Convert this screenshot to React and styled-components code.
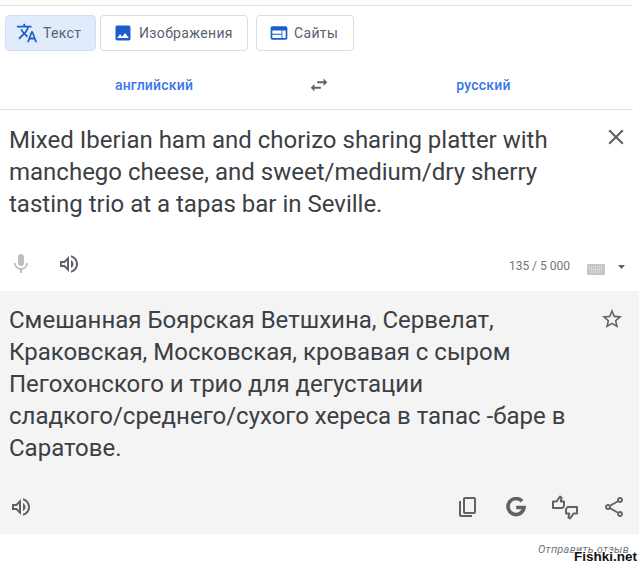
import React from 'react';
import styled, { createGlobalStyle } from 'styled-components';

const Global = createGlobalStyle`
  html, body { margin: 0; padding: 0; background: #fff; }
  body { font-family: Roboto, "Noto Sans", sans-serif; }
`;

const Page = styled.div`
  position: relative;
  width: 641px;
  height: 568px;
  overflow: hidden;
  padding-top: 5px;
  box-sizing: border-box;
  color: #3c4043;
`;
const Top = styled.div`
  width: 633px;
  border-top: 1px solid #e3e3e3;
`;
const Tabs = styled.div`
  display: flex;
  padding: 9px 0 0 5px;
  height: 36px;
`;
const Tab = styled.button`
  display: flex;
  align-items: center;
  box-sizing: border-box;
  height: 36px;
  width: ${p => p.$w}px;
  margin-right: ${p => p.$mr}px;
  padding: 0 0 0 ${p => p.$pl}px;
  gap: ${p => p.$gap}px;
  border: 1px solid ${p => (p.$active ? '#d2e0f7' : '#dadce0')};
  border-radius: 4px;
  background: ${p => (p.$active ? '#e1ebfb' : '#fff')};
  font-family: Roboto, sans-serif;
  font-size: 14px;
  font-weight: 400;
  letter-spacing: 0.35px;
  color: #5a5f6e;
  svg { fill: #1a5fc8; flex: none; }
`;
const LangRow = styled.div`
  display: grid;
  grid-template-columns: 308px 22px 1fr;
  align-items: center;
  box-sizing: border-box;
  width: 633px;
  height: 59px;
  padding-top: 10px;
  border-bottom: 1px solid #e0e0e0;
`;
const Lang = styled.div`
  text-align: center;
  padding-left: ${p => p.$pl || 0}px;
  font-size: 14px;
  font-weight: 500;
  color: #3a76ea;
  letter-spacing: 0.2px;
`;
const Icon = styled.svg`
  display: block;
  flex: none;
  width: ${p => p.$s || 24}px;
  height: ${p => p.$s || 24}px;
  margin-top: ${p => p.$mt || 0}px;
  margin-right: ${p => p.$mr || 0}px;
  fill: ${p => p.$c || '#5f6368'};
`;
const Source = styled.section`
  height: 181px;
  box-sizing: border-box;
  width: 633px;
  padding: 14px 0 0 9px;
  display: flex;
  flex-direction: column;
`;
const TextRow = styled.div`
  display: flex;
  justify-content: space-between;
  align-items: flex-start;
`;
const Body = styled.div`
  font-size: 24px;
  line-height: 32px;
  color: #3c4043;
  width: ${p => p.$w}px;
`;
const NoBreak = styled.span`
  white-space: nowrap;
`;
const SourceTools = styled.div`
  display: flex;
  align-items: center;
  margin-top: 30px;
  height: 28px;
`;
const Count = styled.span`
  font-size: 12px;
  color: #70757a;
  margin-left: auto;
  margin-top: 4px;
`;
const Target = styled.section`
  width: 639px;
  height: 243px;
  box-sizing: border-box;
  background: #f4f4f4;
  padding: 13px 0 0 9px;
  display: flex;
  flex-direction: column;
`;
const TargetTools = styled.div`
  display: flex;
  align-items: center;
  margin-top: 31px;
  height: 24px;
`;
const Feedback = styled.div`
  text-align: right;
  padding: 9px 12px 0 0;
  font-size: 11px;
  font-style: italic;
  color: #70757a;
  letter-spacing: 0.25px;
`;
const Watermark = styled.div`
  position: absolute;
  right: 4px;
  bottom: 4px;
  font-family: "Liberation Sans", sans-serif;
  font-size: 13.5px;
  font-weight: 700;
  color: #111;
  text-shadow: 1px 0 #fff, -1px 0 #fff, 0 1px #fff, 0 -1px #fff, 1px 1px #fff, -1px -1px #fff, 1px -1px #fff, -1px 1px #fff;
`;

const P = {
  translate: 'M12.87 15.07l-2.54-2.51.03-.03c1.74-1.94 2.98-4.17 3.71-6.53H17V4h-7V2H8v2H1v1.99h11.17C11.5 7.92 10.44 9.75 9 11.35 8.07 10.32 7.3 9.19 6.69 8h-2c.73 1.63 1.73 3.17 2.98 4.56l-5.09 5.02L4 19l5-5 3.11 3.11.76-2.04zM18.5 10h-2L12 22h2l1.12-3h4.75L21 22h2l-4.5-12zm-2.62 7l1.62-4.33L19.12 17h-3.24z',
  image: 'M21 19V5c0-1.1-.9-2-2-2H5c-1.1 0-2 .9-2 2v14c0 1.1.9 2 2 2h14c1.1 0 2-.9 2-2zM8.5 13.5l2.5 3.01L14.5 12l4.5 6H5l3.5-4.5z',
  web: 'M20 4H4c-1.1 0-1.99.9-1.99 2L2 18c0 1.1.9 2 2 2h16c1.1 0 2-.9 2-2V6c0-1.1-.9-2-2-2zm-5 14H4v-4h11v4zm0-5H4V9h11v4zm5 5h-4V9h4v9z',
  swap: 'M6.99 11L3 15l3.99 4v-3H14v-2H6.99v-3zM21 9l-3.99-4v3H10v2h7.01v3L21 9z',
  close: 'M19 6.41L17.59 5 12 10.59 6.41 5 5 6.41 10.59 12 5 17.59 6.41 19 12 13.41 17.59 19 19 17.59 13.41 12 19 6.41z',
  mic: 'M12 14c1.66 0 3-1.34 3-3V5c0-1.66-1.34-3-3-3S9 3.34 9 5v6c0 1.66 1.34 3 3 3zm5.3-3c0 3-2.54 5.1-5.3 5.1S6.7 14 6.7 11H5c0 3.41 2.72 6.23 6 6.72V21h2v-3.28c3.28-.48 6-3.3 6-6.72h-1.7z',
  volume: 'M3 9v6h4l5 5V4L7 9H3zm7-.17v6.34L7.83 13H5v-2h2.83L10 8.83zM16.5 12c0-1.77-1.02-3.29-2.5-4.03v8.05c1.48-.73 2.5-2.25 2.5-4.02zM14 3.23v2.06c2.89.86 5 3.54 5 6.71s-2.11 5.85-5 6.71v2.06c4.01-.91 7-4.49 7-8.77 0-4.28-2.99-7.86-7-8.77z',
  star: 'M22 9.24l-7.19-.62L12 2 9.19 8.63 2 9.24l5.46 4.73L5.82 21 12 17.27 18.18 21l-1.63-7.03L22 9.24zM12 15.4l-3.76 2.27 1-4.28-3.32-2.88 4.38-.38L12 6.1l1.71 4.04 4.38.38-3.32 2.88 1 4.28L12 15.4z',
  copy: 'M18 2H9c-1.1 0-2 .9-2 2v13c0 1.1.9 2 2 2h9c1.1 0 2-.9 2-2V4c0-1.1-.9-2-2-2zm0 15H9V4h9v13zM5 6H3v14c0 1.1.9 2 2 2h11v-2H5V6z',
  share: 'M18 16.08c-.76 0-1.44.3-1.96.77L8.91 12.7c.05-.23.09-.46.09-.7s-.04-.47-.09-.7l7.05-4.11c.54.5 1.25.81 2.04.81 1.66 0 3-1.34 3-3s-1.34-3-3-3-3 1.34-3 3c0 .24.04.47.09.7L8.04 9.81C7.5 9.31 6.79 9 6 9c-1.66 0-3 1.34-3 3s1.34 3 3 3c.79 0 1.5-.31 2.04-.81l7.12 4.16c-.05.21-.08.43-.08.65 0 1.61 1.31 2.92 2.92 2.92 1.61 0 2.92-1.31 2.92-2.92s-1.31-2.92-2.92-2.92zM18 4c.55 0 1 .45 1 1s-.45 1-1 1-1-.45-1-1 .45-1 1-1zM6 13c-.55 0-1-.45-1-1s.45-1 1-1 1 .45 1 1-.45 1-1 1zm12 7.02c-.55 0-1-.45-1-1s.45-1 1-1 1 .45 1 1-.45 1-1 1z',
};
const I = ({ d, s, c, mt, mr }) => (
  <Icon viewBox="0 0 24 24" $s={s} $c={c} $mt={mt} $mr={mr}><path d={d} /></Icon>
);

const Gap = styled.div`
  flex: none;
  width: ${p => p.$w}px;
`;
const Svg = styled.svg`
  display: block;
  flex: none;
  margin-top: ${p => p.$mt || 0}px;
`;

const GoogleG = () => (
  <Svg width="20" height="20" viewBox="0 0 20 20" fill="none" stroke="#5f6368" strokeWidth="3.6">
    <path d="M16 4.2A8 8 0 1 0 18 10.500H10.200" />
  </Svg>
);
const Keyboard = () => (
  <Svg $mt={11} width="18" height="11" viewBox="0 0 18 11">
    <rect width="18" height="11" rx="1" fill="#c6c6c6" />
    <path d="M2 3h14M2 5.500h14M4 8h10" stroke="#ececec" strokeWidth="1" strokeDasharray="1 1" />
  </Svg>
);
const Caret = () => (
  <Svg $mt={5} width="7" height="4" viewBox="0 0 7 4"><path d="M0 0h7L3.500 4z" fill="#5f6368" /></Svg>
);
const Thumbs = () => (
  <Svg width="26" height="25" viewBox="0 0 26 25" fill="none" stroke="#5f6368" strokeWidth="2" strokeLinejoin="round">
    <path d="M1 6.500h3.500L8 1.500l1.500 1-.7 4H12V11l-1.500 2H1z" />
    <path d="M25 18.500h-3.500L18 23.500l-1.500-1 .7-4H14V14l1.500-2H25z" />
  </Svg>
);

export default function App() {
  return (
    <Page>
      <Global />
      <Top />
      <Tabs>
        <Tab $active $w={91} $mr={4} $pl={10} $gap={5}><I d={P.translate} s={22} />Текст</Tab>
        <Tab $w={148} $mr={8} $pl={12} $gap={6}><I d={P.image} s={20} />Изображения</Tab>
        <Tab $w={98} $mr={0} $pl={12} $gap={5}><I d={P.web} s={20} />Сайты</Tab>
      </Tabs>
      <LangRow>
        <Lang>английский</Lang>
        <I d={P.swap} s={22} />
        <Lang $pl={4}>русский</Lang>
      </LangRow>
      <Source>
        <TextRow>
          <Body $w={570}>Mixed Iberian ham and chorizo sharing platter with manchego cheese, and sweet/medium/dry sherry tasting trio at a tapas bar in Seville.</Body>
          <I d={P.close} s={26} mr={4} />
        </TextRow>
        <SourceTools>
          <I d={P.mic} s={24} c="#bdbdbd" />
          <Gap $w={24} />
          <I d={P.volume} s={24} />
          <Count>135 / 5 000</Count>
          <Gap $w={17} />
          <Keyboard />
          <Gap $w={13} />
          <Caret />
          <Gap $w={8} />
        </SourceTools>
      </Source>
      <Target>
        <TextRow>
          <Body $w={570}>Смешанная Боярская Ветшхина, Сервелат, Краковская, Московская, кровавая с сыром Пегохонского и трио для дегустации <NoBreak>сладкого/среднего/сухого</NoBreak> хереса в тапас -баре в Саратове.</Body>
          <I d={P.star} s={24} mr={15} mt={3} />
        </TextRow>
        <TargetTools>
          <I d={P.volume} s={24} />
          <Gap $w={423} />
          <I d={P.copy} s={24} />
          <Gap $w={26} />
          <GoogleG />
          <Gap $w={26} />
          <Thumbs />
          <Gap $w={24} />
          <I d={P.share} s={24} />
        </TargetTools>
      </Target>
      <Feedback>Отправить отзыв</Feedback>
      <Watermark>Fishki.net</Watermark>
    </Page>
  );
}
